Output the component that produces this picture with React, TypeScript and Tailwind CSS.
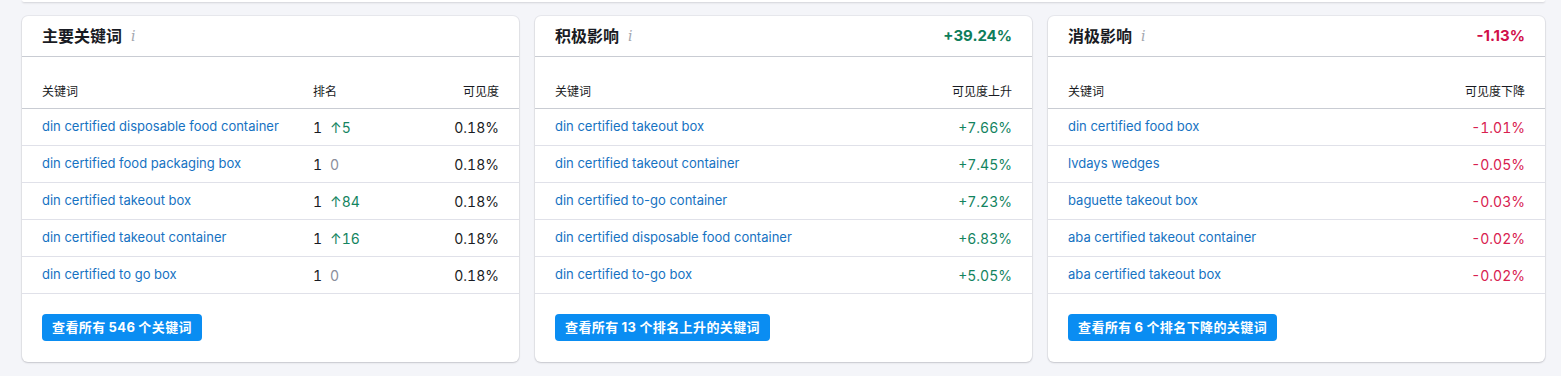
import React from "react";

type Row = { kw: string; rank?: string; change?: string; changeUp?: boolean; value: string };

const font = { fontFamily: 'Inter, "Noto Sans CJK SC", sans-serif' };

const card1: Row[] = [
  { kw: "din certified disposable food container", rank: "1", change: "5", changeUp: true, value: "0.18%" },
  { kw: "din certified food packaging box", rank: "1", change: "0", changeUp: false, value: "0.18%" },
  { kw: "din certified takeout box", rank: "1", change: "84", changeUp: true, value: "0.18%" },
  { kw: "din certified takeout container", rank: "1", change: "16", changeUp: true, value: "0.18%" },
  { kw: "din certified to go box", rank: "1", change: "0", changeUp: false, value: "0.18%" },
];

const card2: Row[] = [
  { kw: "din certified takeout box", value: "+7.66%" },
  { kw: "din certified takeout container", value: "+7.45%" },
  { kw: "din certified to-go container", value: "+7.23%" },
  { kw: "din certified disposable food container", value: "+6.83%" },
  { kw: "din certified to-go box", value: "+5.05%" },
];

const card3: Row[] = [
  { kw: "din certified food box", value: "-1.01%" },
  { kw: "lvdays wedges", value: "-0.05%" },
  { kw: "baguette takeout box", value: "-0.03%" },
  { kw: "aba certified takeout container", value: "-0.02%" },
  { kw: "aba certified takeout box", value: "-0.02%" },
];

function Header({ title, total, totalClass }: { title: string; total?: string; totalClass?: string }) {
  return (
    <div className="flex h-[41px] items-center justify-between border-b border-[#c9ccd3] px-5">
      <div className="flex items-center">
        <span className="text-[16px] font-bold text-[#191b23]">{title}</span>
        <span className="ml-[9px] text-[14px] italic text-[#a4a7b0]" style={{ fontFamily: '"DejaVu Serif", serif' }}>
          i
        </span>
      </div>
      {total && <span className={`text-[15px] font-bold ${totalClass}`}>{total}</span>}
    </div>
  );
}

function Button({ children }: { children: React.ReactNode }) {
  return (
    <div className="px-5 pb-[21px] pt-[20px]">
      <span className="inline-flex h-[27px] items-center rounded-[4px] bg-[#0a8df2] px-[10px] text-[13px] font-semibold tracking-[0.4px] text-white">
        {children}
      </span>
    </div>
  );
}

function Card({
  title,
  total,
  totalClass,
  rows,
  valueHeader,
  valueClass,
  showRank,
  button,
}: {
  title: string;
  total?: string;
  totalClass?: string;
  rows: Row[];
  valueHeader: string;
  valueClass: string;
  showRank?: boolean;
  button: React.ReactNode;
}) {
  return (
    <div className="flex-1 rounded-[6px] bg-white shadow-[0_0_0_1px_rgba(25,27,35,0.05),0_1px_2px_rgba(25,27,35,0.16)]">
      <Header title={title} total={total} totalClass={totalClass} />
      <div className="pt-[19px]">
        <div className="flex h-[33px] items-center border-b border-[#c9ccd3] px-5 text-[12px] text-[#191b23]">
          <div className="flex-1">关键词</div>
          {showRank && <div className="w-[100px]">排名</div>}
          <div className="w-[86px] text-right">{valueHeader}</div>
        </div>
        {rows.map((r, i) => (
          <div key={i} className="flex h-[37px] items-center border-b border-[#e0e1e9] px-5 text-[13px]">
            <div className="flex-1 text-[#1672c2]">{r.kw}</div>
            {showRank && (
              <div className="flex w-[100px] items-center text-[14px] tabular-nums text-[#191b23]">
                <span>{r.rank}</span>
                {r.changeUp ? (
                  <span className="ml-[8px] text-[#13845f]">↑{r.change}</span>
                ) : (
                  <span className="ml-[8px] text-[#8a8e9b]">{r.change}</span>
                )}
              </div>
            )}
            <div className={`w-[86px] text-right text-[14px] tabular-nums ${valueClass}`}>{r.value}</div>
          </div>
        ))}
      </div>
      {button}
    </div>
  );
}

export default function App() {
  return (
    <div className="min-h-[376px] bg-[#f4f5f9]" style={font}>
      <div className="ml-[22px] mr-[16px] h-[2px] rounded-b-[6px] bg-white shadow-[0_1px_2px_rgba(25,27,35,0.16)]" />
      <div className="flex gap-4 pl-[22px] pr-[16px] pt-[14px] pb-[14px]">
        <Card
          title="主要关键词"
          rows={card1}
          valueHeader="可见度"
          valueClass="text-[#191b23]"
          showRank
          button={
            <Button>
              查看所有 <span className="mx-[3px] font-bold">546</span> 个关键词
            </Button>
          }
        />
        <Card
          title="积极影响"
          total="+39.24%"
          totalClass="text-[#0e7d5a]"
          rows={card2}
          valueHeader="可见度上升"
          valueClass="text-[#13845f]"
          button={
            <Button>
              查看所有 <span className="mx-[3px] font-bold">13</span> 个排名上升的关键词
            </Button>
          }
        />
        <Card
          title="消极影响"
          total="-1.13%"
          totalClass="text-[#d10f4a]"
          rows={card3}
          valueHeader="可见度下降"
          valueClass="text-[#d8204f]"
          button={
            <Button>
              查看所有 <span className="mx-[3px] font-bold">6</span> 个排名下降的关键词
            </Button>
          }
        />
      </div>
    </div>
  );
}
